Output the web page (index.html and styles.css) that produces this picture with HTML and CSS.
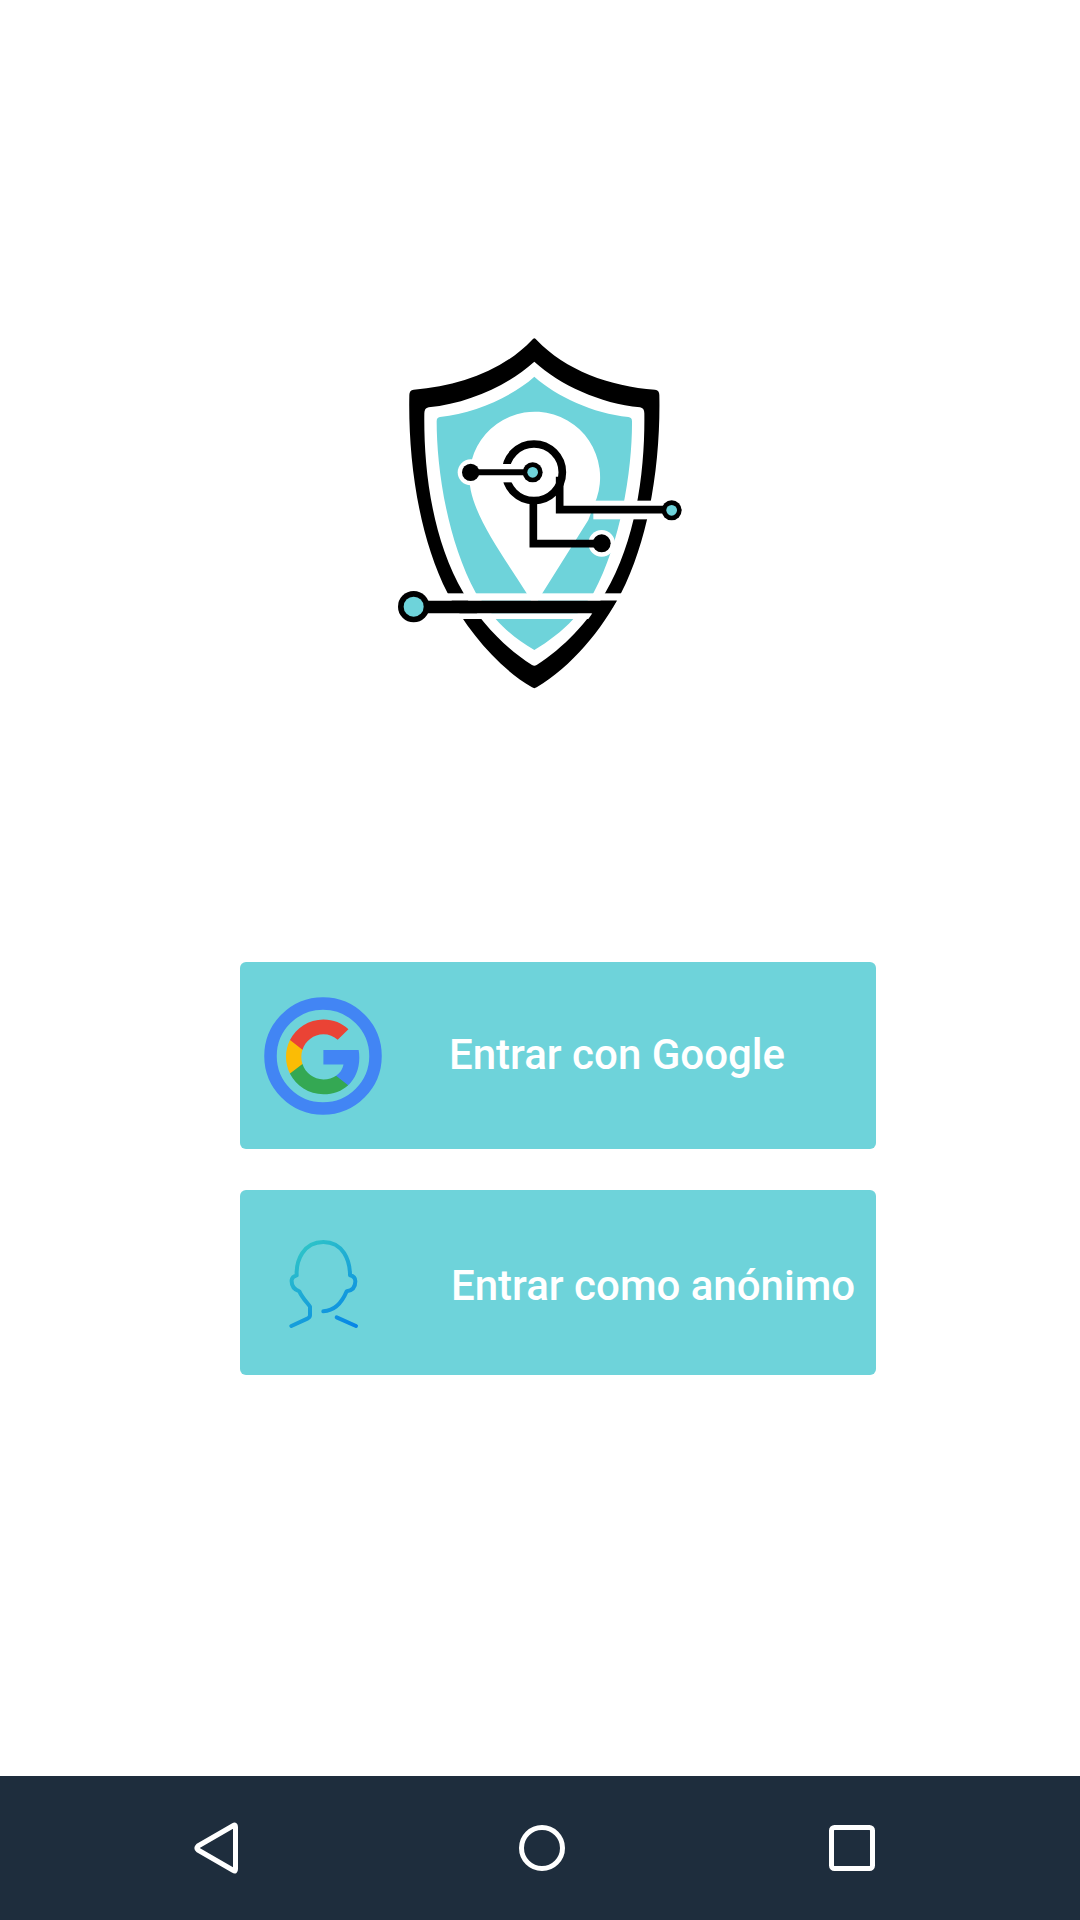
FILE: index.html
```html
<!DOCTYPE html>
<html lang="es">
<head>
<meta charset="utf-8">
<title>Entrar</title>
<link rel="stylesheet" href="styles.css">
</head>
<body>
<div class="page">
  <main class="main">
    <svg class="logo" viewBox="0 0 960 1140" aria-label="Logo">
      <path class="k" d="M463 55Q466 55 470 60C555 150 690 200 825 209Q838 210 838 225C842 420 810 650 723 820C665 930 575 1040 470 1102Q463 1107 456 1102C351 1040 261 930 203 820C116 650 84 420 88 225Q88 210 101 209C236 200 371 150 456 60Q460 55 463 55Z"/>
      <path class="w" d="M463 125C540 195 660 250 780 262Q793 264 793 280C795 430 775 650 675 820C625 905 550 985 470 1035Q463 1039 456 1035C376 985 300 905 251 820C151 650 131 430 133 280Q133 264 146 262C266 250 386 195 463 125Z"/>
      <path class="t" d="M463 170C530 230 640 280 745 291Q756 292 756 304C757 430 730 650 640 820L580 897C545 935 505 965 463 990C420 965 380 935 347 897L288 820C196 650 170 430 170 304Q170 292 180 291C285 280 396 230 463 170Z"/>
      <path class="w" d="M272 510A196 197 0 1 1 650 535L625 600L487 820L463 860L440 820C370 710 290 600 272 510Z"/>
      <rect class="w" x="640" y="542" width="195" height="56"/>
      <rect class="w" x="180" y="820" width="570" height="22"/>
      <path class="w" d="M180 880H637L625 897H180Z"/>
      <circle class="w" cx="272" cy="457" r="39"/>
      <circle class="w" cx="665" cy="670" r="40"/>
      <circle class="line" cx="462" cy="457" r="85"/>
      <rect class="w" x="355" y="432" width="50" height="55"/>
      <path class="line thin" d="M272 457H440"/>
      <path class="line" d="M460 545V671H665"/>
      <path class="line" d="M539 470V569H860"/>
      <path class="k" d="M130 842H710L685 880H130Z"/>
      <circle class="k" cx="272" cy="457" r="26"/>
      <circle class="k" cx="665" cy="670" r="27"/>
      <circle class="k" cx="458" cy="457" r="30"/>
      <circle class="t" cx="458" cy="457" r="16"/>
      <circle class="k" cx="875" cy="571" r="30"/>
      <circle class="t" cx="875" cy="571" r="16"/>
      <circle class="k" cx="101" cy="860" r="47"/>
      <circle class="t" cx="101" cy="860" r="30"/>
    </svg>

    <div class="actions">
      <button class="btn btn-google" type="button">
        <svg class="btn-icon" viewBox="0 0 120 120" aria-hidden="true">
          <circle class="ring" cx="60" cy="60" r="52.5"/>
          <g transform="translate(19.6 20) scale(1.7)">
            <path fill="#4285F4" d="M45.12 24.5c0-1.56-.14-3.06-.4-4.5H24v8.51h11.84c-.51 2.75-2.06 5.08-4.39 6.64v5.52h7.11c4.16-3.83 6.56-9.47 6.56-16.17z"/>
            <path fill="#34A853" d="M24 46c5.94 0 10.92-1.97 14.56-5.33l-7.11-5.52c-1.97 1.32-4.49 2.2-7.45 2.2-5.73 0-10.58-3.87-12.31-9.07H4.34v5.7C7.96 41.07 15.4 46 24 46z"/>
            <path fill="#FBBC05" d="M11.69 28.18C11.25 26.86 11 25.45 11 24s.25-2.86.69-4.18v-5.7H4.34C2.85 17.09 2 20.45 2 24c0 3.55.85 6.91 2.34 9.88l7.35-5.7z"/>
            <path fill="#EA4335" d="M24 10.75c3.23 0 6.13 1.11 8.41 3.29l6.31-6.31C34.91 4.18 29.93 2 24 2 15.4 2 7.96 6.93 4.34 14.12l7.35 5.7c1.73-5.2 6.58-9.07 12.31-9.07z"/>
          </g>
        </svg>
        <span class="btn-label">Entrar con Google</span>
      </button>
      <button class="btn btn-anon" type="button">
        <svg class="btn-icon" viewBox="99 127 360 360" aria-hidden="true">
          <defs>
            <linearGradient id="face" gradientUnits="userSpaceOnUse" x1="190" y1="190" x2="380" y2="440">
              <stop offset="0" stop-color="#30C8C6"/>
              <stop offset="1" stop-color="#0584E8"/>
            </linearGradient>
          </defs>
          <path class="face" d="M184 436L232 414Q240 410 240 404V378C228 362 216 350 208 332C190 326 184 312 185 298C186 290 192 286 200 284C198 240 220 184 280 184C340 184 360 240 360 284C370 286 376 292 376 302C376 320 366 330 350 332C340 356 322 390 280 392"/>
          <path class="face" d="M320 410L378 436"/>
        </svg>
        <span class="btn-label">Entrar como anónimo</span>
      </button>
    </div>
  </main>

  <nav class="navbar">
    <svg class="nav-icon" viewBox="0 0 60 60" aria-hidden="true"><path d="M49.5 9V51Q49.5 54 47.5 52.5L12 32Q10 30 12 28L47.5 7.5Q49.5 6 49.5 9Z"/></svg>
    <svg class="nav-icon" viewBox="0 0 60 60" aria-hidden="true"><circle cx="30" cy="30" r="20.5"/></svg>
    <svg class="nav-icon" viewBox="0 0 60 60" aria-hidden="true"><rect x="9.5" y="9.5" width="41" height="41" rx="3"/></svg>
  </nav>
</div>
</body>
</html>
```

FILE: styles.css
```css
* { box-sizing: border-box; }

html, body {
  margin: 0;
  padding: 0;
  background: #fff;
}

.page {
  width: 1080px;
  height: 1920px;
  display: flex;
  flex-direction: column;
  font-family: Roboto, "Liberation Sans", sans-serif;
}

.main {
  flex: 1;
  padding-top: 320px;
}

.logo {
  display: block;
  width: 320px;
  height: 380px;
  margin-left: 380px;
}

.logo .k { fill: #000; }
.logo .w { fill: #fff; }
.logo .t { fill: #6ED3DA; }

.logo .line {
  fill: none;
  stroke: #000;
  stroke-width: 23;
}

.logo .line.thin { stroke-width: 18; }

.actions {
  margin: 262px 0 0 240px;
  width: 636px;
  display: flex;
  flex-direction: column;
  gap: 41px;
}

.btn {
  display: flex;
  align-items: center;
  width: 100%;
  padding: 0 0 0 23px;
  border: 0;
  border-radius: 6px;
  background: #6ED3DA;
  color: #fff;
  font-family: inherit;
  text-align: left;
}

.btn-google { height: 187px; }
.btn-anon { height: 185px; }

.btn-icon {
  flex: none;
  width: 120px;
  height: 120px;
}

.btn-label {
  font-size: 42px;
  font-weight: 500;
  white-space: nowrap;
}

.btn-google .btn-label {
  margin-left: 66px;
  margin-bottom: 2px;
}

.btn-anon .btn-label {
  margin-left: 68px;
  margin-top: 6px;
}

.ring {
  fill: none;
  stroke: #4285F4;
  stroke-width: 12.5;
}

.face {
  fill: none;
  stroke: url(#face);
  stroke-width: 12;
  stroke-linecap: round;
  stroke-linejoin: round;
}

.navbar {
  flex: none;
  height: 144px;
  background: #1E2D3D;
  display: grid;
  grid-template-columns: 326px 310px 60px;
  align-items: center;
  padding-left: 186px;
}

.nav-icon {
  display: block;
  width: 60px;
  height: 60px;
  fill: none;
  stroke: #fff;
  stroke-width: 5;
  stroke-linejoin: round;
}
```
